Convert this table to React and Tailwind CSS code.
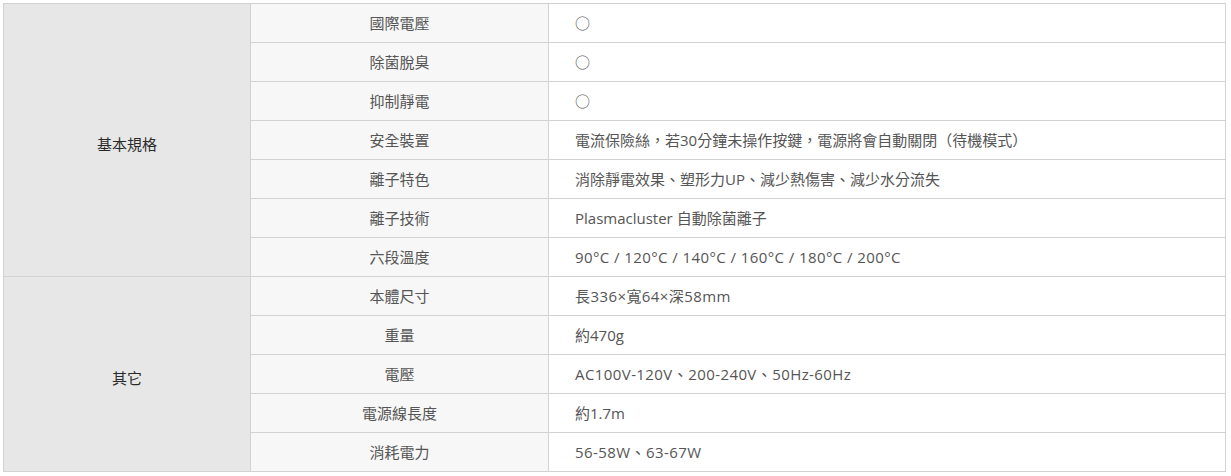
import React from "react";

// [label, value, wide digits?]
const groups = [
  {
    title: "基本規格",
    rows: [
      ["國際電壓", "○"],
      ["除菌脫臭", "○"],
      ["抑制靜電", "○"],
      ["安全裝置", "電流保險絲，若30分鐘未操作按鍵，電源將會自動關閉（待機模式）"],
      ["離子特色", "消除靜電效果、塑形力UP、減少熱傷害、減少水分流失"],
      ["離子技術", "Plasmacluster 自動除菌離子"],
      ["六段溫度", "90°C / 120°C / 140°C / 160°C / 180°C / 200°C", true],
    ],
  },
  {
    title: "其它",
    rows: [
      ["本體尺寸", "長336×寬64×深58mm", true],
      ["重量", "約470g"],
      ["電壓", "AC100V-120V、200-240V、50Hz-60Hz", true],
      ["電源線長度", "約1.7m"],
      ["消耗電力", "56-58W、63-67W", true],
    ],
  },
];

export default function App() {
  return (
    <div
      className="bg-white pl-[3px] pt-[3px] text-[15px] text-[#555] [text-spacing-trim:space-all]"
      style={{ fontFamily: '"Open Sans", "Noto Sans CJK TC", sans-serif' }}
    >
      <table className="w-[1223px] table-fixed border-collapse border border-[#d2d2d2]">
        <colgroup>
          <col className="w-[247px]" />
          <col className="w-[298px]" />
          <col />
        </colgroup>
        <tbody>
          {groups.map((g) =>
            g.rows.map((r, i) => (
              <tr key={g.title + r[0]} className="h-[39px]">
                {i === 0 && (
                  <td
                    rowSpan={g.rows.length}
                    className="border border-[#d2d2d2] bg-[#e7e7e7] pt-[9px] text-center text-[#2a2a2a]"
                  >
                    {g.title}
                  </td>
                )}
                <td className="border border-[#d2d2d2] bg-[#f7f7f7] text-center">
                  {r[0]}
                </td>
                <td
                  className={
                    "border border-[#d2d2d2] bg-white pl-[26px] " +
                    (r[2] ? "tracking-[0.42px]" : "")
                  }
                >
                  {r[1]}
                </td>
              </tr>
            ))
          )}
        </tbody>
      </table>
    </div>
  );
}
